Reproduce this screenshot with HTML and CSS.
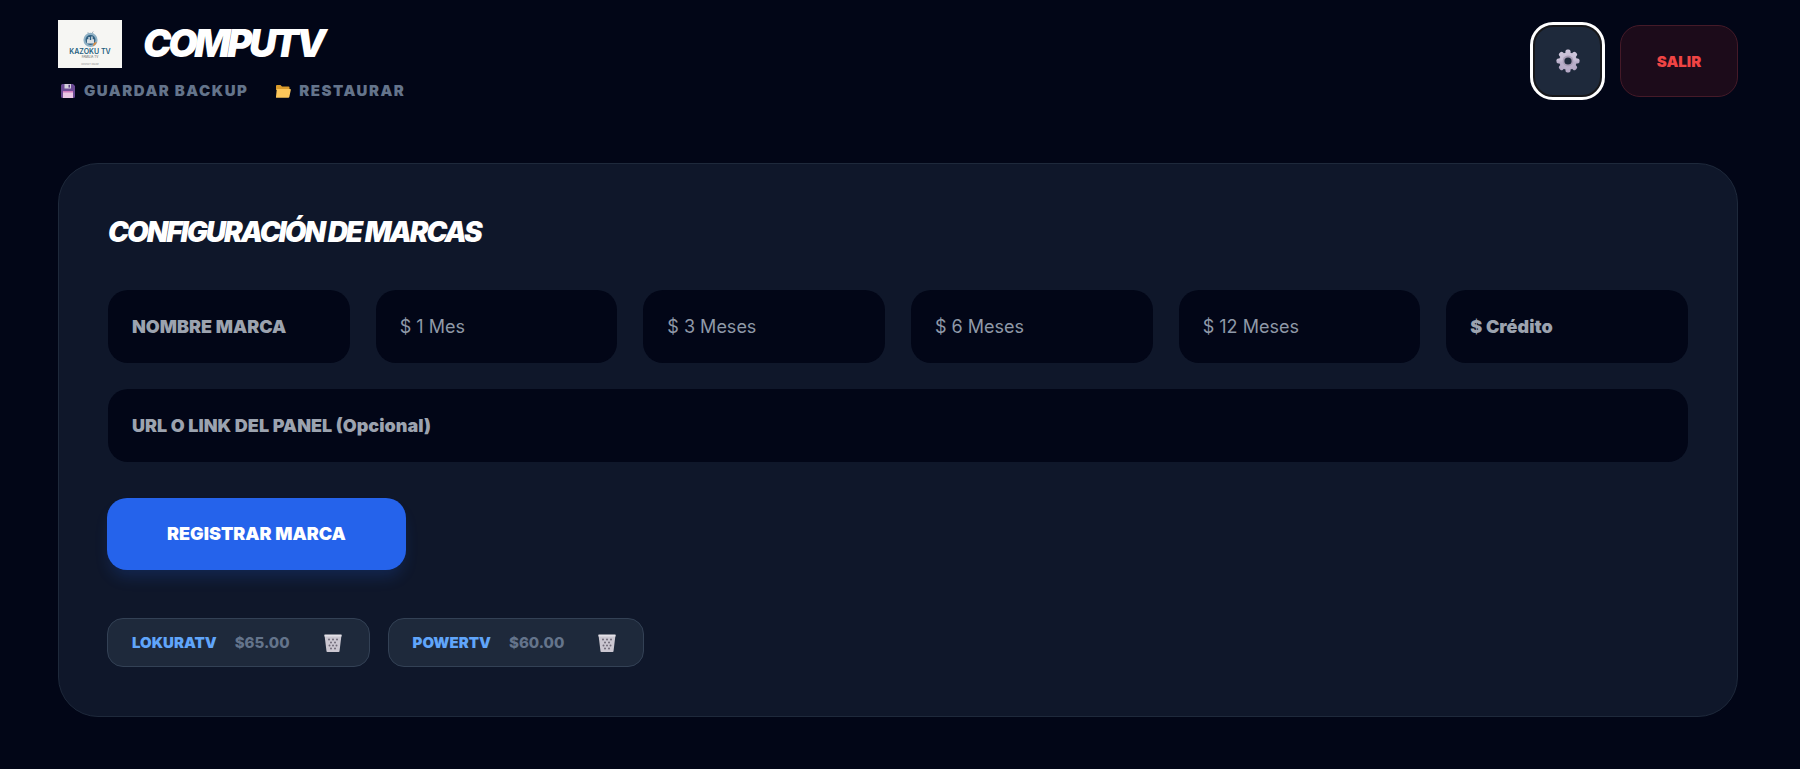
FILE: index.html
```html
<!DOCTYPE html>
<html lang="es">
<head>
<meta charset="utf-8">
<title>COMPUTV</title>
<link rel="stylesheet" href="styles.css">
</head>
<body>
<header class="top">
  <div class="brand">
    <div class="brand-row">
      <div class="logo">
        <svg class="logo-mark" viewBox="0 0 24 24" width="17" height="17">
          <path d="M8 3l3 3M16 2l-3 4" stroke="#8a9aa8" stroke-width="1" fill="none"/>
          <circle cx="12" cy="14" r="10" fill="#8fb0c4"/>
          <circle cx="12" cy="14" r="7" fill="#2f5f80"/>
          <path d="M7 19v-6h2v-3h2v4h2v-5h2v4h2v6z" fill="#d8dfe4"/>
          <path d="M15 23a10 10 0 0 0 6-6l-4 1z" fill="#dd8a3c"/>
        </svg>
        <span class="logo-name">KAZOKU TV</span>
        <span class="logo-sub">FAMILIA TV</span>
        <span class="logo-foot">CONTACT ONLINE</span>
      </div>
      <h1 class="title">COMPUTV</h1>
    </div>
    <nav class="links">
      <a class="link">
        <svg viewBox="0 0 16 16" width="16" height="16"><path d="M1 2.500A1.500 1.500 0 0 1 2.500 1H13l2 2v10.500a1.500 1.500 0 0 1-1.500 1.500h-11A1.500 1.500 0 0 1 1 13.500z" fill="#6b4a94"/><rect x="4.500" y="1" width="6.500" height="4.500" fill="#d4d0dc"/><rect x="8.500" y="1.800" width="1.500" height="2.800" fill="#5b3f80"/><rect x="3" y="8" width="10" height="7" fill="#e9c6e4"/><rect x="3" y="8" width="10" height="1.500" fill="#d07cc0"/></svg>
        GUARDAR BACKUP
      </a>
      <a class="link">
        <svg viewBox="0 0 16 16" width="16" height="16"><path d="M1 3A1 1 0 0 1 2 2h3.500L7 3.500h6.500a1 1 0 0 1 1 1V7H1z" fill="#d99a2b"/><path d="M2.500 6H15a.8.8 0 0 1 .8 1L14.300 14a1 1 0 0 1-1 .8H1.800a.8.8 0 0 1-.8-1L1.700 6.700a.8.8 0 0 1 .8-.7z" fill="#fcc65a"/></svg>
        RESTAURAR
      </a>
    </nav>
  </div>
  <div class="actions">
    <button class="btn-gear" aria-label="Ajustes">
      <svg viewBox="0 0 24 24" width="24" height="24">
        <defs>
          <linearGradient id="gearfill" x1="0" y1="0" x2="0" y2="1"><stop offset="0" stop-color="#cfc6dc"/><stop offset="1" stop-color="#b3a7c4"/></linearGradient>
        </defs>
        <g fill="url(#gearfill)">
          <circle cx="12" cy="12" r="8.800"/>
          <rect x="9.500" y="0.500" width="5" height="23" rx="1.800"/>
          <rect x="0.500" y="9.500" width="23" height="5" rx="1.800"/>
          <rect x="9.500" y="0.500" width="5" height="23" rx="1.800" transform="rotate(45 12 12)"/>
          <rect x="9.500" y="0.500" width="5" height="23" rx="1.800" transform="rotate(-45 12 12)"/>
        </g>
        <circle cx="12" cy="12" r="5.400" fill="#a89cb6"/>
        <circle cx="12" cy="12" r="3.600" fill="#1e293b"/>
      </svg>
    </button>
    <button class="btn-exit">SALIR</button>
  </div>
</header>

<main class="card">
  <h2 class="card-title">CONFIGURACIÓN DE MARCAS</h2>
  <div class="grid">
    <div class="field strong">NOMBRE MARCA</div>
    <div class="field">$ 1 Mes</div>
    <div class="field">$ 3 Meses</div>
    <div class="field">$ 6 Meses</div>
    <div class="field">$ 12 Meses</div>
    <div class="field strong">$ Crédito</div>
    <div class="field strong wide">URL O LINK DEL PANEL (Opcional)</div>
  </div>
  <button class="btn-primary">REGISTRAR MARCA</button>
  <ul class="chips">
    <li class="chip">
      <span class="chip-name">LOKURATV</span>
      <span class="chip-price">$65.00</span>
      <svg class="trash" viewBox="0 0 18 18" width="18" height="18"><path d="M0.500 1h17l-2 16.200a.8.8 0 0 1-.8.8H3.300a.8.8 0 0 1-.8-.8z" fill="#cbc7d1"/><rect x="0.500" y="0.500" width="17" height="2" fill="#e4e1e8"/><g fill="#6f6a78"><circle cx="5" cy="5.500" r="1"/><circle cx="9" cy="5.500" r="1"/><circle cx="13" cy="5.500" r="1"/><circle cx="7" cy="8.500" r="1"/><circle cx="11" cy="8.500" r="1"/><circle cx="5.500" cy="11.500" r="1"/><circle cx="9" cy="11.500" r="1"/><circle cx="12.500" cy="11.500" r="1"/><circle cx="7" cy="14.500" r="1"/><circle cx="11" cy="14.500" r="1"/></g></svg>
    </li>
    <li class="chip">
      <span class="chip-name">POWERTV</span>
      <span class="chip-price">$60.00</span>
      <svg class="trash" viewBox="0 0 18 18" width="18" height="18"><path d="M0.500 1h17l-2 16.200a.8.8 0 0 1-.8.8H3.300a.8.8 0 0 1-.8-.8z" fill="#cbc7d1"/><rect x="0.500" y="0.500" width="17" height="2" fill="#e4e1e8"/><g fill="#6f6a78"><circle cx="5" cy="5.500" r="1"/><circle cx="9" cy="5.500" r="1"/><circle cx="13" cy="5.500" r="1"/><circle cx="7" cy="8.500" r="1"/><circle cx="11" cy="8.500" r="1"/><circle cx="5.500" cy="11.500" r="1"/><circle cx="9" cy="11.500" r="1"/><circle cx="12.500" cy="11.500" r="1"/><circle cx="7" cy="14.500" r="1"/><circle cx="11" cy="14.500" r="1"/></g></svg>
    </li>
  </ul>
</main>
</body>
</html>
```
FILE: styles.css
```css
* { box-sizing: border-box; }
html, body { margin: 0; height: 100%; overflow: hidden; }
body {
  background: #020617;
  font-family: Inter, "Liberation Sans", sans-serif;
  padding: 20px 62px 0 58px;
  color: #fff;
}
.top {
  display: flex;
  justify-content: space-between;
  align-items: flex-start;
  height: 143px;
}
.brand-row { display: flex; align-items: flex-start; gap: 21px; }
.logo {
  width: 64px;
  height: 48px;
  background: #f6f6f3;
  display: flex;
  flex-direction: column;
  align-items: center;
  padding-top: 10px;
  color: #1f5f80;
  overflow: hidden;
}
.logo-mark { display: block; flex: none; width: 17px; height: 17px; }
.logo-name { font-size: 7px; font-weight: 600; line-height: 7px; margin-top: 1px; white-space: nowrap; }
.logo-sub { font-size: 3px; line-height: 4px; color: #555; white-space: nowrap; }
.logo-foot { font-size: 2px; line-height: 3px; margin-top: 4px; color: #888; white-space: nowrap; }
.title {
  margin: 5px 0 0;
  font-size: 38px;
  line-height: 36px;
  font-weight: 900;
  font-style: italic;
  letter-spacing: -3.3px;
}
.links { display: flex; gap: 27px; margin-top: 14px; padding-left: 2px; }
.link {
  display: flex;
  align-items: center;
  gap: 8px;
  font-size: 15px;
  line-height: 17px;
  font-weight: 900;
  letter-spacing: 1.5px;
  color: #64748b;
}
.actions { display: flex; align-items: center; gap: 18px; padding-top: 5px; }
.btn-gear {
  width: 69px;
  height: 72px;
  background: #1e293b;
  border: 2px solid #18181b;
  border-radius: 20px;
  outline: 3px solid #fff;
  display: flex;
  align-items: center;
  justify-content: center;
  padding: 0;
}
.btn-exit {
  width: 118px;
  height: 72px;
  background: #1c0b1a;
  border: 1px solid #451a28;
  border-radius: 20px;
  color: #ef4444;
  font: 900 15px Inter, sans-serif;
}
.card {
  background: #0f172a;
  border: 1px solid #1e293b;
  border-radius: 40px;
  width: 1680px;
  height: 554px;
  padding: 48px 49px;
}
.card-title {
  margin: 0 0 38px;
  font-size: 28px;
  line-height: 40px;
  font-weight: 900;
  font-style: italic;
  letter-spacing: -2px;
}
.grid {
  display: grid;
  grid-template-columns: repeat(6, 1fr);
  gap: 26px;
}
.field {
  height: 73px;
  background: #020617;
  border-radius: 20px;
  padding: 0 24px;
  display: flex;
  align-items: center;
  font-size: 18px;
  color: #8f99a8;
}
.strong { font-weight: 900; color: #9ca3af; }
.wide { grid-column: 1 / -1; }
.btn-primary {
  margin: 36px 0 0 -1px;
  width: 299px;
  height: 72px;
  padding: 0 0 2px;
  background: #2563eb;
  color: #fff;
  border: 0;
  border-radius: 20px;
  font: 900 18px Inter, sans-serif;
  box-shadow: 0 10px 15px -3px rgba(37, 99, 235, .2);
}
.chips {
  list-style: none;
  margin: 48px 0 0 -1px;
  padding: 0;
  display: flex;
  gap: 18px;
}
.chip {
  height: 49px;
  background: #1e293b;
  border: 1px solid #334155;
  border-radius: 16px;
  padding: 0 27px 0 24px;
  display: flex;
  align-items: center;
  font-size: 15px;
  font-weight: 900;
}
.chip-name { color: #60a5fa; margin-right: 18px; }
.chip-price { color: #64748b; font-weight: 800; margin-right: 34px; }
.trash { display: block; }
```
